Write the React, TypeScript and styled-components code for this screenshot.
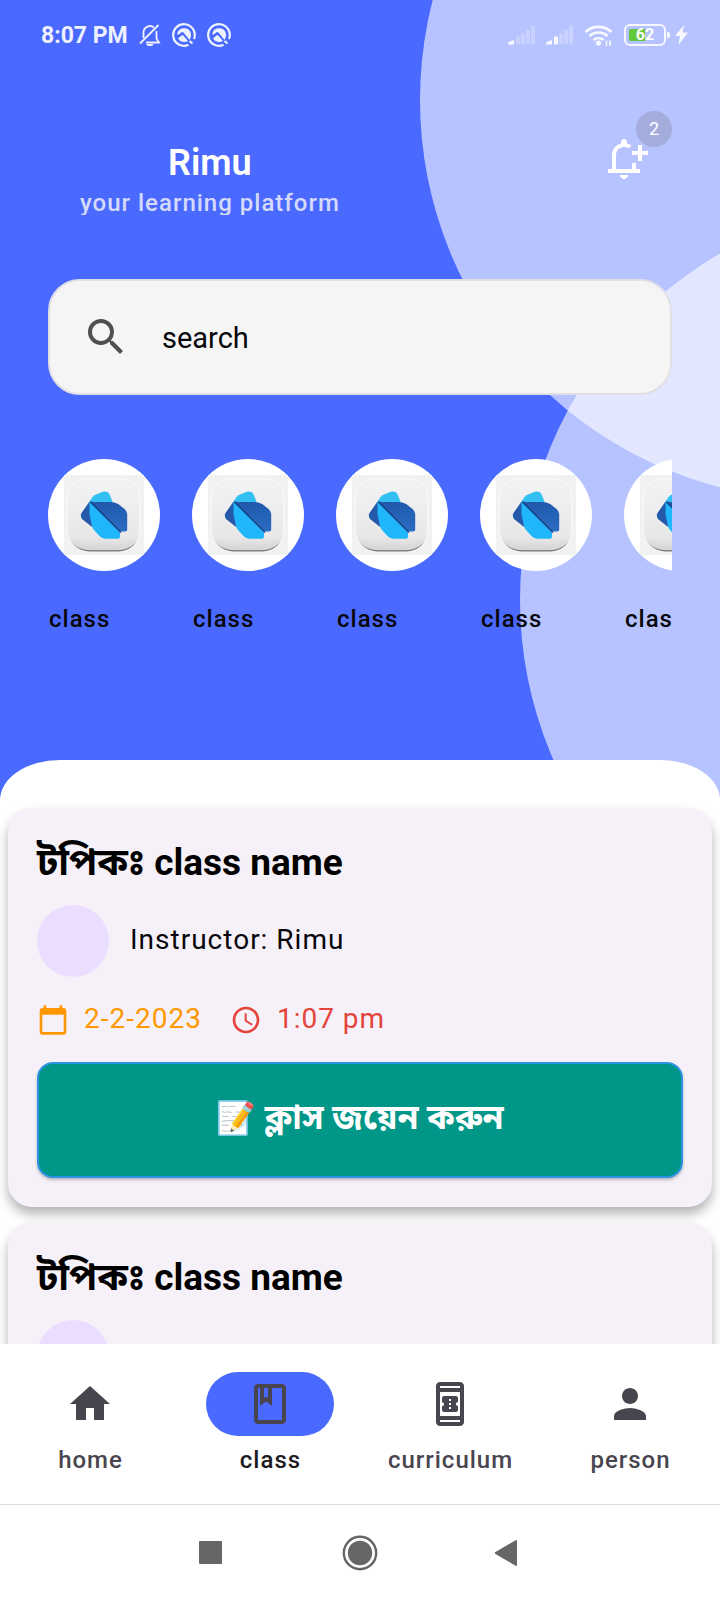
import React from "react";
import styled, { createGlobalStyle } from "styled-components";
import {
  MdCalendarToday,
  MdHome,
  MdOutlineBookOnline,
  MdOutlineClass,
  MdOutlineNotificationAdd,
  MdPerson,
  MdSchedule,
  MdSearch,
} from "react-icons/md";

const GlobalStyle = createGlobalStyle`
  * { box-sizing: border-box; }
  body {
    margin: 0;
    background: #ffffff;
    color: #08070c;
    font-family: Roboto, "Noto Sans Bengali", "Noto Sans", sans-serif;
  }
  button, input { font-family: inherit; }
  h1, h2, p { margin: 0; }
`;

const Screen = styled.div`
  display: flex;
  flex-direction: column;
  height: 100vh;
  overflow: hidden;
`;

const Hero = styled.header`
  position: relative;
  flex: none;
  overflow: hidden;
  background: #4a69ff;
`;

const Backdrop = styled.svg`
  position: absolute;
  top: 0;
  right: 0;
`;

const HeroContent = styled.div`
  position: relative;
`;

const StatusBar = styled.div`
  display: flex;
  align-items: center;
  justify-content: space-between;
  height: 70px;
  padding: 0 32px 0 41px;
  color: #eef1ff;
`;

const StatusGroup = styled.div<{ $gap: number }>`
  display: flex;
  align-items: center;
  gap: ${(p) => p.$gap}px;
`;

const Clock = styled.span`
  padding-top: 2px;
  font-size: 23px;
  line-height: 28px;
  font-weight: 700;
`;

const Battery = styled.span`
  display: flex;
  align-items: center;
`;

const BatteryCell = styled.span`
  width: 42px;
  height: 22px;
  padding: 3px;
  border: 2px solid #f6f7ff;
  border-radius: 6px;
  background: linear-gradient(90deg, #63c83c 16px, transparent 16px) content-box no-repeat;
  color: #ffffff;
  font-size: 16px;
  line-height: 12px;
  font-weight: 700;
  text-align: center;
`;

const BatteryNub = styled.span`
  width: 3px;
  height: 6px;
  margin-left: 1px;
  border-radius: 0 2px 2px 0;
  background: #f6f7ff;
`;

const TitleRow = styled.div`
  display: flex;
  justify-content: space-between;
  padding: 41px 48px 0 80px;
`;

const Brand = styled.div`
  padding-top: 30px;
  text-align: center;
`;

const AppName = styled.h1`
  color: #ffffff;
  font-size: 36px;
  line-height: 44px;
  font-weight: 600;
`;

const Tagline = styled.p`
  height: 30px;
  overflow: hidden;
  color: #d5dafa;
  font-size: 24px;
  line-height: 36px;
  font-weight: 500;
  letter-spacing: 1px;
`;

const BellButton = styled.button`
  position: relative;
  align-self: flex-start;
  width: 72px;
  height: 72px;
  padding: 24px 24px 0 0;
  border: 0;
  background: none;
  color: #ffffff;
  svg { display: block; }
`;

const Badge = styled.span`
  position: absolute;
  top: 0;
  right: 0;
  width: 36px;
  height: 36px;
  border-radius: 50%;
  background: #a4acdc;
  font-size: 18px;
  line-height: 36px;
  text-align: center;
`;

const SearchBox = styled.label`
  display: flex;
  align-items: center;
  gap: 32px;
  height: 116px;
  margin: 64px 48px 0;
  padding: 0 32px;
  border: 2px solid #dfe0e6;
  border-radius: 32px;
  background: #f5f5f5;
  color: #4f4f4f;
  svg { flex: none; }
`;

const SearchInput = styled.input`
  flex: 1;
  min-width: 0;
  padding: 2px 0 0;
  border: 0;
  outline: 0;
  background: none;
  color: #08070c;
  font-size: 29px;
  line-height: 36px;
  &::placeholder { color: #08070c; opacity: 1; }
`;

const Categories = styled.div`
  display: flex;
  gap: 32px;
  margin: 64px 48px 0;
  overflow: hidden;
`;

const Category = styled.button`
  display: flex;
  flex: none;
  flex-direction: column;
  align-items: flex-start;
  gap: 32px;
  width: 112px;
  padding: 0;
  border: 0;
  background: none;
  color: #08070c;
`;

const CategoryDisc = styled.span`
  display: flex;
  align-items: center;
  justify-content: center;
  width: 112px;
  height: 112px;
  border-radius: 50%;
  background: #ffffff;
`;

const Label = styled.span`
  padding-left: 1px;
  font-size: 24px;
  line-height: 32px;
  font-weight: 500;
  letter-spacing: 1px;
`;

const SheetLip = styled.div`
  height: 40px;
  margin-top: 125px;
  border-radius: 60px 60px 0 0 / 40px 40px 0 0;
  background: #ffffff;
`;

const CardList = styled.main`
  display: flex;
  flex: 1;
  flex-direction: column;
  gap: 16px;
  min-height: 0;
  padding: 8px;
  overflow-y: auto;
  scrollbar-width: none;
`;

const Card = styled.article`
  flex: none;
  padding: 29px;
  border-radius: 24px;
  background: #f6f1f9;
  box-shadow: 0 7px 12px rgba(0, 0, 0, 0.3);
`;

const Topic = styled.h2`
  color: #000000;
  font-size: 37px;
  line-height: 52px;
  font-weight: 700;
`;

const TopicPrefix = styled.span`
  font-size: 38px;
  line-height: 40px;
`;

const InstructorRow = styled.div`
  display: flex;
  align-items: center;
  gap: 21px;
  margin-top: 16px;
`;

const Avatar = styled.span`
  width: 72px;
  height: 72px;
  border-radius: 50%;
  background: #eaddff;
`;

const BodyText = styled.span`
  padding-bottom: 2px;
  font-size: 28px;
  line-height: 30px;
  letter-spacing: 1px;
`;

const Schedule = styled.div`
  display: flex;
  gap: 28px;
  margin: 27px 0 26px;
`;

const ScheduleItem = styled.div<{ $color: string }>`
  display: flex;
  align-items: center;
  gap: 15px;
  color: ${(p) => p.$color};
`;

const JoinButton = styled.button`
  display: block;
  width: 100%;
  height: 116px;
  padding: 0 0 6px;
  border: 2px solid #2b93e2;
  border-radius: 16px;
  background: #009688;
  box-shadow: 0 2px 3px rgba(0, 0, 0, 0.25);
  color: #ffffff;
  font-size: 34px;
  line-height: 40px;
  font-weight: 700;
`;

const JoinEmoji = styled.span`
  font-size: 32px;
`;

const BottomNav = styled.nav`
  display: grid;
  flex: none;
  grid-template-columns: repeat(4, 1fr);
  padding: 28px 0;
  border-bottom: 1px solid #dedede;
  background: #ffffff;
`;

const NavItem = styled.a<{ $active: boolean }>`
  display: flex;
  flex-direction: column;
  align-items: center;
  gap: 8px;
  color: ${(p) => (p.$active ? "#1c1b1f" : "#49454f")};
  text-decoration: none;
`;

const NavPill = styled.span<{ $active: boolean }>`
  display: flex;
  align-items: center;
  justify-content: center;
  width: 128px;
  height: 64px;
  border-radius: 32px;
  background: ${(p) => (p.$active ? "#4a69ff" : "transparent")};
  color: #49454f;
`;

const SystemBar = styled.div`
  display: flex;
  flex: none;
  justify-content: center;
  height: 95px;
  background: #ffffff;
`;

const SystemButton = styled.button`
  display: flex;
  align-items: center;
  justify-content: center;
  width: 150px;
  padding: 0;
  border: 0;
  background: none;
`;

const MutedBell = () => (
  <svg width="22" height="24" viewBox="0 0 22 24" fill="none" stroke="currentColor" strokeWidth="1.8">
    <path d="M4.500 15V10A6.500 6.500 0 0 1 15 4.500M17.500 8V15.500l2.500 4H7" />
    <path d="M1 20.500 19.500 2" />
    <path d="M7.500 21h7a3.500 2 0 0 1-7 0z" fill="currentColor" stroke="none" />
  </svg>
);

const DiscGlyph = () => (
  <svg width="24" height="24" viewBox="0 0 24 24" fill="none">
    <path d="M16.500 21.800A10.800 10.800 0 1 1 22 16" stroke="currentColor" strokeWidth="2.200" />
    <path d="M5.200 10.500A7.200 7.200 0 0 1 19 10.500Q19.500 14 17.500 17L11.500 9.500Q10.500 8.500 9.500 9.300L6 12Z" fill="currentColor" />
    <path d="M6 15.500 9.800 12.200Q10.500 11.700 11.200 12.500L16 18A7.200 7.200 0 0 1 6 15.500Z" fill="currentColor" />
    <path d="M17.500 18 20.500 20.500" stroke="currentColor" strokeWidth="2.200" />
  </svg>
);

const Signal = ({ level }: { level: number }) => (
  <svg width="28" height="20" viewBox="0 0 28 20" fill="#f8f9ff">
    <path d="M0 19.500V18q2-2 6-3v4.500z" />
    {[12, 9, 5, 1].map((top, i) => (
      <rect key={top} x={8 + i * 5} y={top - 0.5} width="4" height={20 - top} rx="1" opacity={i + 1 < level ? 1 : 0.28} />
    ))}
  </svg>
);

const Wifi = () => (
  <svg width="30" height="24" viewBox="0 0 30 24" fill="none" stroke="#f8f9ff" strokeWidth="2.600">
    <path d="M1.500 9a19 19 0 0 1 26 0" />
    <path d="M5.500 13a13.500 13.500 0 0 1 18 0" />
    <path d="M9.500 17a8 8 0 0 1 10 0" />
    <circle cx="14.500" cy="20" r="2.600" fill="#f8f9ff" stroke="none" />
    <path d="M22.500 17.500v5.500M26 17.500v5.500" strokeWidth="1.600" />
  </svg>
);

const Bolt = () => (
  <svg width="13" height="20" viewBox="0 0 13 20" fill="#f8f9ff">
    <path d="M9 0 0 11h5L3.500 20 13 7.500H7.500z" />
  </svg>
);

const DartLogo = () => (
  <svg width="80" height="80" viewBox="0 0 80 80">
    <defs>
      <linearGradient id="tile" x1="0" y1="0" x2="0" y2="1">
        <stop offset="0" stopColor="#f3f3f3" />
        <stop offset="0.8" stopColor="#e8e8e8" />
        <stop offset="1" stopColor="#d2d2d2" />
      </linearGradient>
      <linearGradient id="navy" x1="0" y1="0" x2="0" y2="1">
        <stop offset="0" stopColor="#2058ab" />
        <stop offset="1" stopColor="#2a6cc2" />
      </linearGradient>
    </defs>
    <rect width="80" height="80" fill="#f1f1f1" />
    <path d="M23 4H57Q75 4 75.500 22V55Q75 76 54 76.500H26Q4 76 3.500 55V22Q5 4 23 4Z" fill="url(#tile)" stroke="#fafafa" strokeWidth="1" />
    <path d="M8 67Q14 76 26 76.500H54Q66 76 72 67Q65 75 54 75.300H26Q14 75 8 67Z" fill="#707070" />
    <path d="M25.500 26.500 17.200 38.500Q16.200 41 18 44L27.700 51.700L33 40Z" fill="#2459aa" />
    <path d="M25.500 26.500 28.500 22Q29.500 20.500 31 20L38.500 16.800Q41 16 44 17.300Q46 19 49 28.500H27Z" fill="#33c0f0" />
    <path d="M25.500 26.500 30 27H46Q51 27 54.500 29.300L60.500 34Q63 36 63.200 39V54.500Q63.200 56.500 61 56.500H56Z" fill="url(#navy)" />
    <path d="M25.500 26.500 56 57.500V61.500Q56 63.700 54 63.700H41Q38 63.700 35.500 61L30 55Q28.500 53.500 28 51L25.500 39Z" fill="#1fb6fb" />
    <path d="M26.500 27 57 57.500" stroke="#173f80" strokeWidth="1.500" />
  </svg>
);

const navItems = [
  { label: "home", Icon: MdHome },
  { label: "class", Icon: MdOutlineClass },
  { label: "curriculum", Icon: MdOutlineBookOnline },
  { label: "person", Icon: MdPerson },
];

type Lesson = { topic: string; instructor?: string; date?: string; time?: string };

const lessons: Lesson[] = [
  { topic: "class name", instructor: "Rimu", date: "2-2-2023", time: "1:07 pm" },
  { topic: "class name" },
];

const LessonCard = ({ topic, instructor, date, time }: Lesson) => (
  <Card>
    <Topic>
      <TopicPrefix>টপিকঃ</TopicPrefix> {topic}
    </Topic>
    <InstructorRow>
      <Avatar />
      {instructor && <BodyText>Instructor: {instructor}</BodyText>}
    </InstructorRow>
    {date && time && (
      <>
        <Schedule>
          <ScheduleItem $color="#ff9800">
            <MdCalendarToday size={32} />
            <BodyText>{date}</BodyText>
          </ScheduleItem>
          <ScheduleItem $color="#e5443a">
            <MdSchedule size={32} />
            <BodyText>{time}</BodyText>
          </ScheduleItem>
        </Schedule>
        <JoinButton type="button">
          <JoinEmoji>📝</JoinEmoji> ক্লাস জয়েন করুন
        </JoinButton>
      </>
    )}
  </Card>
);

export default function App() {
  return (
    <Screen>
      <GlobalStyle />
      <Hero>
        <Backdrop width="300" height="800" viewBox="0 0 300 800" fill="#ffffff" fillOpacity="0.6" aria-hidden="true">
          <circle cx="400" cy="100" r="400" />
          <circle cx="500" cy="600" r="400" />
        </Backdrop>
        <HeroContent>
          <StatusBar>
            <StatusGroup $gap={11}>
              <Clock>8:07 PM</Clock>
              <MutedBell />
              <DiscGlyph />
              <DiscGlyph />
            </StatusGroup>
            <StatusGroup $gap={10}>
              <Signal level={1} />
              <Signal level={2} />
              <Wifi />
              <StatusGroup $gap={5}>
                <Battery>
                  <BatteryCell>62</BatteryCell>
                  <BatteryNub />
                </Battery>
                <Bolt />
              </StatusGroup>
            </StatusGroup>
          </StatusBar>
          <TitleRow>
            <Brand>
              <AppName>Rimu</AppName>
              <Tagline>your learning platform</Tagline>
            </Brand>
            <BellButton type="button" aria-label="Notifications">
              <MdOutlineNotificationAdd size={48} />
              <Badge>2</Badge>
            </BellButton>
          </TitleRow>
          <SearchBox>
            <MdSearch size={48} />
            <SearchInput type="text" placeholder="search" aria-label="search" />
          </SearchBox>
          <Categories>
            {[0, 1, 2, 3, 4].map((n) => (
              <Category key={n} type="button">
                <CategoryDisc>
                  <DartLogo />
                </CategoryDisc>
                <Label>class</Label>
              </Category>
            ))}
          </Categories>
          <SheetLip />
        </HeroContent>
      </Hero>
      <CardList>
        {lessons.map((lesson, i) => (
          <LessonCard key={i} {...lesson} />
        ))}
      </CardList>
      <BottomNav>
        {navItems.map(({ label, Icon }) => (
          <NavItem key={label} href={`#${label}`} $active={label === "class"}>
            <NavPill $active={label === "class"}>
              <Icon size={48} />
            </NavPill>
            <Label>{label}</Label>
          </NavItem>
        ))}
      </BottomNav>
      <SystemBar>
        <SystemButton type="button" aria-label="Recent apps">
          <svg width="23" height="23" viewBox="0 0 23 23">
            <rect width="23" height="23" rx="1" fill="#666666" />
          </svg>
        </SystemButton>
        <SystemButton type="button" aria-label="Home screen">
          <svg width="36" height="36" viewBox="0 0 36 36">
            <circle cx="18" cy="18" r="16.2" fill="none" stroke="#666666" strokeWidth="2.4" />
            <circle cx="18" cy="18" r="12.2" fill="#666666" />
          </svg>
        </SystemButton>
        <SystemButton type="button" aria-label="Back">
          <svg width="32" height="28" viewBox="0 0 32 28">
            <path d="M1.500 13 22 1Q23 1 23 2V26Q23 27 22 27L1.500 15Q0 14 1.500 13Z" fill="#666666" />
          </svg>
        </SystemButton>
      </SystemBar>
    </Screen>
  );
}
